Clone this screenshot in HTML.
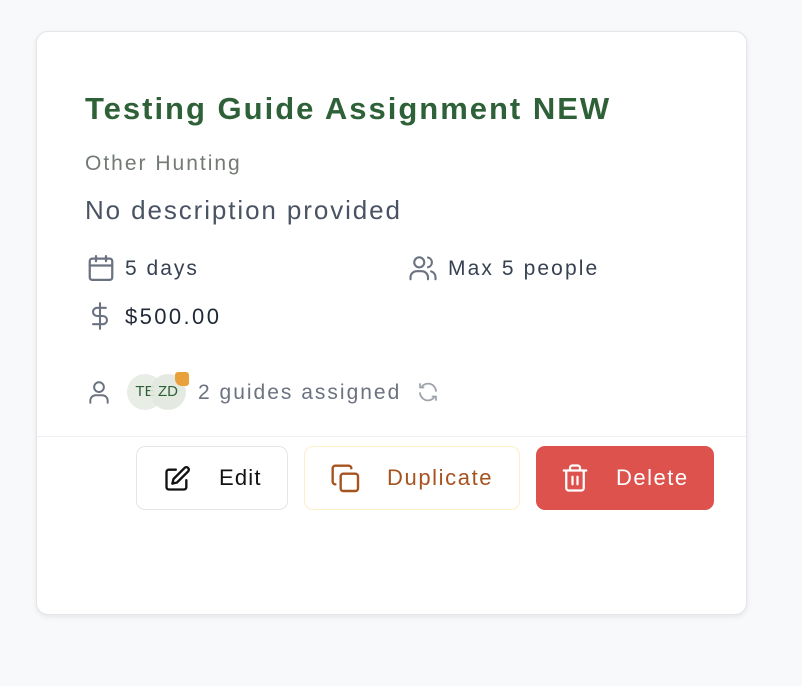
<!DOCTYPE html>
<html><head><meta charset="utf-8"><style>
*{box-sizing:border-box;margin:0;padding:0}
body{width:802px;height:686px;background:#f8f9fb;font-family:"Liberation Sans",sans-serif;position:relative;overflow:hidden}
.card{position:absolute;left:36px;top:31px;width:711px;height:584px;background:#fff;border:1px solid #e3e5e8;border-radius:12px;box-shadow:0 2px 6px rgba(0,0,0,.08)}
.a{position:absolute;white-space:nowrap}
svg{position:absolute;fill:none;stroke-linecap:round;stroke-linejoin:round}
.btn{position:absolute;top:446px;height:64px;border-radius:9px;font-size:22px;display:flex;align-items:center}
</style></head><body>
<div class="card"></div>
<div class="a" style="left:85px;top:91px;font-size:31px;font-weight:bold;color:#2f6138;letter-spacing:2px">Testing Guide Assignment NEW</div>
<div class="a" style="left:85px;top:152px;font-size:21px;color:#727a72;letter-spacing:2px">Other Hunting</div>
<div class="a" style="left:85px;top:195px;font-size:26px;color:#4a5363;letter-spacing:1.9px">No description provided</div>

<svg style="left:86px;top:253px" width="30" height="30" viewBox="0 0 24 24" stroke="#6b7280" stroke-width="1.8"><rect x="3" y="4.5" width="18" height="17" rx="2"/><path d="M3 10h18M8 2.5v4M16 2.5v4"/></svg>
<div class="a" style="left:125px;top:257px;font-size:21px;color:#374151;letter-spacing:2px">5 days</div>
<svg style="left:407px;top:253px" width="32" height="30" viewBox="0 0 24 24" stroke="#6b7280" stroke-width="1.7"><circle cx="9" cy="7.5" r="4"/><path d="M2 21v-1.5a5 5 0 0 1 5-5h4a5 5 0 0 1 5 5V21M16 3.6a4 4 0 0 1 0 7.8M22 21v-1.5a5 5 0 0 0-3.5-4.8"/></svg>
<div class="a" style="left:448px;top:257px;font-size:21px;color:#374151;letter-spacing:2.1px">Max 5 people</div>
<svg style="left:86px;top:300px" width="28" height="32" viewBox="0 0 24 24" stroke="#6b7280" stroke-width="1.8"><path d="M12 1v22M17 5H9.5a3.5 3.5 0 0 0 0 7h5a3.5 3.5 0 0 1 0 7H6"/></svg>
<div class="a" style="left:125px;top:304px;font-size:22px;color:#1f2937;letter-spacing:2.4px;font-weight:500">$500.00</div>

<svg style="left:86px;top:378px" width="26" height="28" viewBox="0 0 24 24" stroke="#6b7280" stroke-width="1.8"><circle cx="12" cy="7.5" r="4.5"/><path d="M4 22v-2a5 5 0 0 1 5-5h6a5 5 0 0 1 5 5v2"/></svg>
<div class="a" style="left:127px;top:374px;width:36px;height:36px;border-radius:50%;background:#e8ede6;font-size:15px;color:#2f6138;line-height:36px;text-align:center">TE</div>
<div class="a" style="left:150px;top:374px;width:36px;height:36px;border-radius:50%;background:rgba(225,232,222,.9);font-size:15px;color:#2f6138;line-height:36px;text-align:center">ZD</div>
<div class="a" style="left:175px;top:372px;width:14px;height:14px;border-radius:3px 3px 3px 7px;background:#e9a13b"></div>
<div class="a" style="left:198px;top:381px;font-size:21px;color:#6b7280;letter-spacing:2px">2 guides assigned</div>
<svg style="left:416px;top:380px" width="24" height="24" viewBox="0 0 24 24" stroke="#a0a5ad" stroke-width="1.8"><path d="M20 11a8 8 0 0 0-14.5-4M4 4v3.5h3.5M4 13a8 8 0 0 0 14.5 4M20 20v-3.5h-3.5"/></svg>

<div class="a" style="left:37px;top:436px;width:709px;height:1px;background:#eef0f2"></div>

<div class="btn" style="left:136px;width:152px;border:1.5px solid #e4e6ea;background:#fff;color:#111">
<svg style="left:26px;top:18px" width="28" height="28" viewBox="0 0 24 24" stroke="#111" stroke-width="2"><path d="M11 4H5a2 2 0 0 0-2 2v13a2 2 0 0 0 2 2h13a2 2 0 0 0 2-2v-6"/><path d="M18.5 2.5a2.1 2.1 0 0 1 3 3L12 15l-4 1 1-4z"/></svg>
<span style="position:absolute;left:82px;letter-spacing:1.2px">Edit</span></div>
<div class="btn" style="left:304px;width:216px;border:1.5px solid #fdf0c8;background:#fff;color:#a5531f">
<svg style="left:25px;top:16px" width="32" height="32" viewBox="0 0 24 24" stroke="#a5531f" stroke-width="1.8"><rect x="8" y="8" width="13" height="13" rx="2"/><path d="M4 16c-1.1 0-2-.9-2-2V4c0-1.1.9-2 2-2h10c1.1 0 2 .9 2 2"/></svg>
<span style="position:absolute;left:82px;letter-spacing:1.6px">Duplicate</span></div>
<div class="btn" style="left:536px;width:178px;background:#dd524c;color:#fff">
<svg style="left:24px;top:16px" width="30" height="32" viewBox="0 0 24 24" stroke="#fff" stroke-width="1.8"><path d="M3 6h18M19 6v14a2 2 0 0 1-2 2H7a2 2 0 0 1-2-2V6M8 6V4a2 2 0 0 1 2-2h4a2 2 0 0 1 2 2v2M10 11v6M14 11v6"/></svg>
<span style="position:absolute;left:80px;letter-spacing:1.5px">Delete</span></div>
</body></html>
